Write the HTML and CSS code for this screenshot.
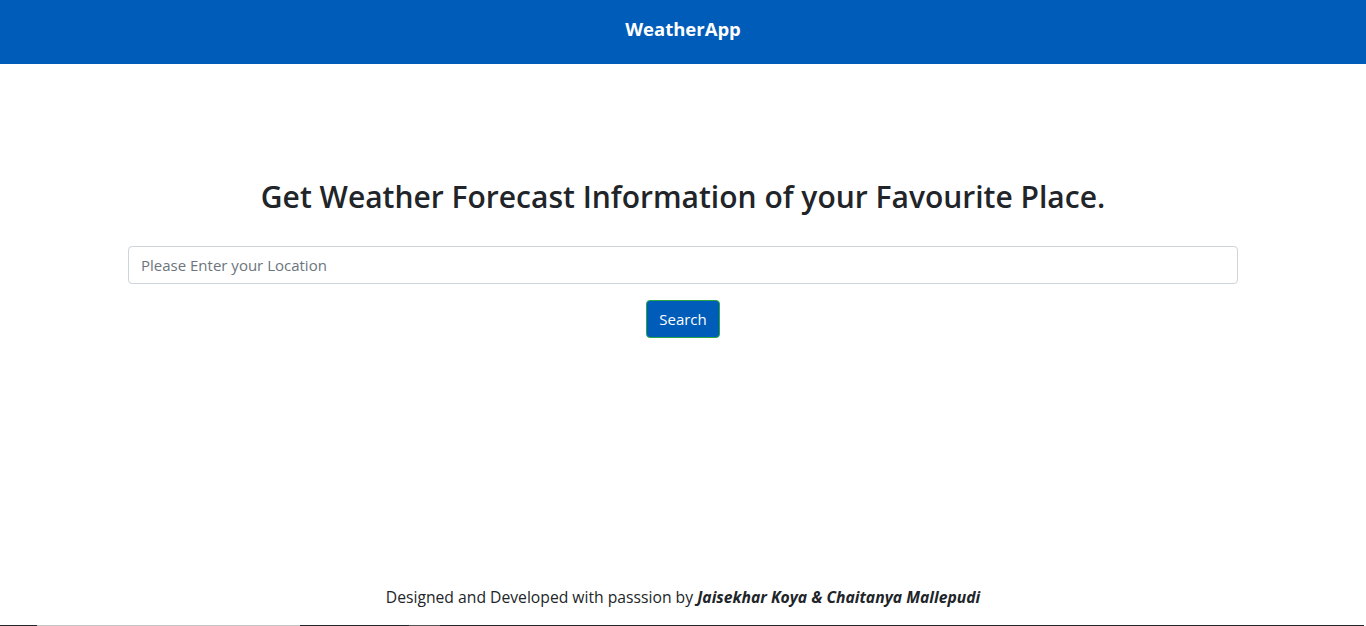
FILE: index.html
```html
<!DOCTYPE html>
<html lang="en">
<head>
<meta charset="utf-8">
<title>WeatherApp</title>
<link rel="stylesheet" href="styles.css">
</head>
<body>
<div class="page">
  <header class="navbar"><span class="brand">WeatherApp</span></header>
  <main class="main">
    <h2 class="title">Get Weather Forecast Information of your Favourite Place.</h2>
    <div class="container">
      <input class="form-control" type="text" placeholder="Please Enter your Location">
      <button class="btn" type="button">Search</button>
    </div>
  </main>
  <footer class="footer">Designed and Developed with passsion by <b><i>Jaisekhar Koya &amp; Chaitanya Mallepudi</i></b></footer>
</div>
<div class="strip"></div>
</body>
</html>
```

FILE: styles.css
```css
* { box-sizing: border-box; }
html, body { margin: 0; padding: 0; }
body {
  font-family: "Open Sans", "Noto Sans", sans-serif;
  font-size: 16px;
  line-height: 1.5;
  color: #212529;
  background: #fff;
  overflow: hidden;
}
.page {
  height: 625px;
  display: flex;
  flex-direction: column;
}
.navbar {
  height: 64px;
  background: #005cb9;
  display: flex;
  align-items: center;
  justify-content: center;
  padding-bottom: 6px;
}
.brand {
  color: #fff;
  font-weight: 700;
  font-size: 18.5px;
}
.main {
  flex: 1;
  padding-top: 114px;
  display: flex;
  flex-direction: column;
  align-items: center;
}
.title {
  margin: 0 0 30px;
  font-size: 30px;
  font-weight: 600;
  line-height: 38px;
  text-align: center;
}
.container {
  width: 1110px;
  display: flex;
  flex-direction: column;
  align-items: center;
  gap: 16px;
}
.form-control {
  width: 100%;
  height: 38px;
  padding: 6px 12px;
  border: 1px solid #ced4da;
  border-radius: 4px;
  font: inherit;
  font-size: 15px;
  color: #495057;
  outline: none;
}
.form-control::placeholder { color: #6c757d; }
.btn {
  width: 74px;
  height: 38px;
  background: #005cb9;
  border: 1px solid #28a745;
  border-radius: 4px;
  color: #fff;
  font: inherit;
  font-size: 15px;
  padding: 0;
}
.footer {
  text-align: center;
  padding: 0 0 16px;
  font-size: 15.7px;
  line-height: 24px;
}
.strip {
  height: 1px;
  background: linear-gradient(to right,
    #212529 0, #212529 37px,
    #c4c4c4 37px, #c4c4c4 300px,
    #212529 300px, #212529 409px,
    #555 409px, #555 440px,
    #212529 440px, #212529 1364px,
    #fff 1364px);
}
```
